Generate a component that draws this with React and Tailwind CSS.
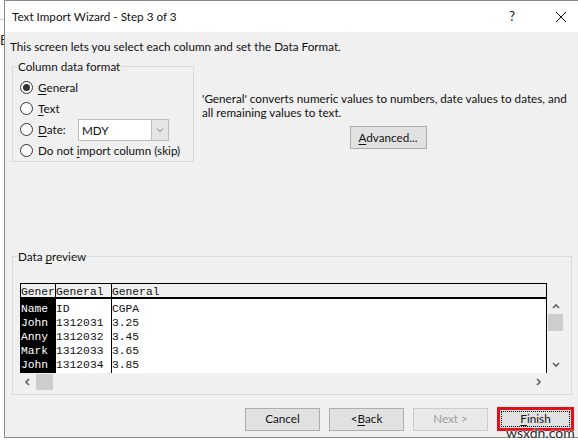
import React from "react";

const UI = { fontFamily: 'Lato, "Noto Sans", Arial, sans-serif' };
const MONO = { fontFamily: '"Liberation Mono", "Courier New", monospace' };

function Radio({ checked }) {
  return (
    <span className="relative flex h-[13px] w-[13px] items-center justify-center rounded-full border border-[#333] bg-white">
      {checked && <span className="h-[7px] w-[7px] rounded-full bg-[#333]" />}
    </span>
  );
}

function Btn({ children, disabled }) {
  return (
    <div
      className={
        "flex h-[23px] w-[75px] items-center justify-center border text-[11.7px] " +
        (disabled
          ? "border-[#cccccc] bg-[#e9e9e9] text-[#9d9d9d]"
          : "border-[#adadad] bg-[#e1e1e1] text-[#111]")
      }
    >
      {children}
    </div>
  );
}

function Chev({ dir }) {
  const d = {
    up: "M1 5 L4 2 L7 5",
    down: "M1 2 L4 5 L7 2",
    left: "M5 1 L2 4 L5 7",
    right: "M2 1 L5 4 L2 7",
  }[dir];
  return (
    <svg width="8" height="8" viewBox="0 0 8 8">
      <path d={d} fill="none" stroke="#606060" strokeWidth="1.6" />
    </svg>
  );
}

const rows = [
  ["Name", "ID", "CGPA"],
  ["John", "1312031", "3.25"],
  ["Anny", "1312032", "3.45"],
  ["Mark", "1312033", "3.65"],
  ["John", "1312034", "3.85"],
];

export default function App() {
  return (
    <div className="relative flex h-[440px] w-[578px] overflow-hidden bg-white" style={UI}>
      {/* background window sliver */}
      <div className="flex w-[4px] flex-col overflow-hidden">
        <div className="h-[20px] border-b border-[#c8c8c8]" />
        <div className="mt-[14px] text-[13px] leading-[13px] text-[#222]">E</div>
      </div>

      {/* dialog */}
      <div className="flex h-[438px] flex-1 flex-col border-l border-t border-b border-[#8a8a8a] bg-[#f0f0f0]">
        {/* title bar */}
        <div className="flex h-[31px] items-center bg-white pl-[7px]">
          <span className="text-[11.7px] text-[#111]">Text Import Wizard - Step 3 of 3</span>
          <span className="ml-auto mr-[40px] text-[13px] text-[#111]">?</span>
          <svg width="12" height="12" viewBox="0 0 12 12" className="mr-[11px]">
            <path d="M1 1 L11 11 M11 1 L1 11" stroke="#111" strokeWidth="1" />
          </svg>
        </div>

        {/* body */}
        <div className="flex flex-col text-[11.7px]">
          <div className="ml-[5px] mt-[6px] leading-[16px] text-[#111]">
            This screen lets you select each column and set the Data Format.
          </div>

          <div className="mt-[12px] flex">
            {/* Column data format group */}
            <div className="relative ml-[7px] h-[96px] w-[182px] border border-[#d9d9d9] pl-[7px] pt-[10px]">
              <span className="absolute -top-[9px] left-[4px] bg-[#f0f0f0] px-[1px] leading-[16px] text-[#111]">
                Column data format
              </span>
              <div className="flex h-[21px] items-center gap-[5px] text-[#111]">
                <Radio checked />
                <span><span className="underline underline-offset-2">G</span>eneral</span>
              </div>
              <div className="flex h-[21px] items-center gap-[5px] text-[#111]">
                <Radio />
                <span><span className="underline underline-offset-2">T</span>ext</span>
              </div>
              <div className="flex h-[21px] items-center gap-[5px] text-[#111]">
                <Radio />
                <span className="w-[35px]"><span className="underline underline-offset-2">D</span>ate:</span>
                <div className="flex h-[22px] w-[91px] border border-[#bdbdbd] bg-white">
                  <span className="flex-1 pl-[3px] leading-[20px]">MDY</span>
                  <span className="flex w-[17px] items-center justify-center border-l border-[#bdbdbd] bg-[#e5e5e5]">
                    <svg width="8" height="6" viewBox="0 0 8 6">
                      <path d="M1 1.5 L4 4.5 L7 1.5" fill="none" stroke="#707070" strokeWidth="1" />
                    </svg>
                  </span>
                </div>
              </div>
              <div className="flex h-[21px] items-center gap-[5px] whitespace-nowrap text-[#111]">
                <Radio />
                <span>Do not <span className="underline underline-offset-2">i</span>mport column (skip)</span>
              </div>
            </div>

            {/* explanation */}
            <div className="ml-[8px] flex flex-1 flex-col pt-[25px] pr-[4px]">
              <div className="leading-[14px] text-[#111]">
                'General' converts numeric values to numbers, date values to dates, and all remaining values to text.
              </div>
              <div className="mt-[7px] flex justify-center">
                <div className="flex h-[23px] w-[77px] items-center justify-center border border-[#adadad] bg-[#e1e1e1] text-[#111]">
                  <span><span className="underline underline-offset-2">A</span>dvanced...</span>
                </div>
              </div>
            </div>
          </div>

          {/* Data preview group */}
          <div className="relative ml-[7px] mt-[94px] h-[139px] w-[560px] border border-[#d9d9d9] pl-[7px] pt-[26px]">
            <span className="absolute -top-[9px] left-[4px] bg-[#f0f0f0] px-[1px] leading-[16px] text-[#111]">
              Data <span className="underline underline-offset-2">p</span>review
            </span>
            <div className="flex">
              <div className="flex w-[527px] flex-col">
                {/* table */}
                <div className="flex h-[90px] border-l border-r border-t border-black bg-white text-[11.3px] text-[#111]" style={MONO}>
                  <div className="flex w-[35px] flex-col border-r border-black">
                    <div className="h-[15px] overflow-hidden border-b-2 border-black bg-[#f0f0f0] pt-[3px] leading-[11px]">Gener</div>
                    <div className="flex-1 bg-black pt-[3px] text-white">
                      {rows.map((r, i) => (
                        <div key={i} className="h-[14px] leading-[14px]">{r[0]}</div>
                      ))}
                    </div>
                  </div>
                  <div className="flex w-[56px] flex-col border-r border-black">
                    <div className="h-[15px] overflow-hidden border-b-2 border-black bg-[#f0f0f0] pt-[3px] leading-[11px]">General</div>
                    <div className="flex-1 pt-[3px]">
                      {rows.map((r, i) => (
                        <div key={i} className="h-[14px] leading-[14px]">{r[1]}</div>
                      ))}
                    </div>
                  </div>
                  <div className="flex flex-1 flex-col">
                    <div className="h-[15px] overflow-hidden border-b-2 border-black bg-[#f0f0f0] pt-[3px] leading-[11px]">General</div>
                    <div className="flex-1 pt-[3px]">
                      {rows.map((r, i) => (
                        <div key={i} className="h-[14px] leading-[14px]">{r[2]}</div>
                      ))}
                    </div>
                  </div>
                </div>
                {/* horizontal scrollbar */}
                <div className="flex h-[17px] items-center">
                  <div className="flex w-[16px] items-center justify-center"><Chev dir="left" /></div>
                  <div className="h-[16px] w-[17px] bg-[#cdcdcd]" />
                  <div className="ml-auto flex w-[17px] items-center justify-center"><Chev dir="right" /></div>
                </div>
              </div>
              {/* vertical scrollbar */}
              <div className="flex h-[90px] w-[17px] flex-col items-center pt-[16px]">
                <div className="flex h-[15px] items-center justify-center"><Chev dir="up" /></div>
                <div className="h-[17px] w-[15px] bg-[#cdcdcd]" />
                <div className="mt-auto flex h-[16px] items-center justify-center"><Chev dir="down" /></div>
              </div>
            </div>
          </div>

          {/* buttons */}
          <div className="mr-[4px] mt-[12px] flex items-center justify-end gap-[9px]">
            <Btn>Cancel</Btn>
            <Btn>&lt; <span className="underline underline-offset-2">B</span>ack</Btn>
            <Btn disabled>Next &gt;</Btn>
            <div className="flex h-[24px] w-[77px] border-[3px] border-[#e3101c] bg-[#e1e1e1] p-[1px]">
              <div className="flex flex-1 items-center justify-center border border-dotted border-black text-[#111]">
                <span><span className="underline underline-offset-2">F</span>inish</span>
              </div>
            </div>
          </div>
        </div>
      </div>

      {/* watermark */}
      <div className="absolute left-[506px] top-[427px] text-[14px] leading-[12px] text-[#2a2a2a] [text-shadow:0_0_2px_#fff,0_0_2px_#fff]">
        wsxdn.com
      </div>
    </div>
  );
}
